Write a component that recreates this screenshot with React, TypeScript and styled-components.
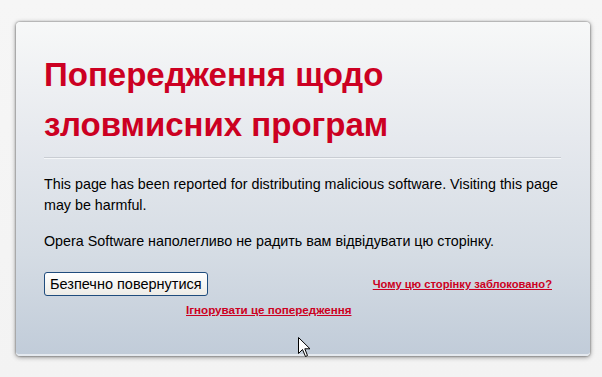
import React from 'react'
import styled, { createGlobalStyle } from 'styled-components'

const GlobalStyle = createGlobalStyle`
  html, body {
    margin: 0;
    padding: 0;
  }
  body {
    width: 602px;
    height: 377px;
    overflow: hidden;
    background: linear-gradient(180deg, #f6f6f6 0%, #f3f3f3 100%);
    font-family: "Liberation Sans", Arial, sans-serif;
  }
`;

const PageWrapper = styled.div`
  position: relative;
  width: 602px;
  height: 377px;
  padding: 22px 12px 0 16px;
  box-sizing: border-box;
`;

const Card = styled.div`
  width: 574px;
  height: 334px;
  box-sizing: border-box;
  padding: 28px 29px 0 28px;
  border-radius: 4px;
  background: linear-gradient(180deg, #f7f8f8 0%, #e6e9ee 35%, #d5dce4 70%, #c1ccd9 100%);
  border-bottom: 2px solid #e4e9ef;
  box-shadow: 0 0 2px rgba(0, 0, 0, 0.55), 0 1px 5px rgba(0, 0, 0, 0.45);
`;

const Title = styled.h1`
  margin: 0;
  padding-bottom: 7px;
  font-family: "Liberation Sans", Arial, sans-serif;
  font-size: 33px;
  line-height: 50px;
  font-weight: bold;
  color: #cc0022;
  border-bottom: 1px solid #c9cdd3;
  box-shadow: 0 1px 0 #f4f6f8;
`;

const Paragraph = styled.p`
  margin: 0;
  padding-top: ${(props: { gap: number }) => props.gap}px;
  font-size: 14.3px;
  line-height: 21px;
  color: #000;
`;

const ActionRow = styled.div`
  display: flex;
  align-items: center;
  justify-content: space-between;
  margin-top: 20px;
  padding-right: 9px;
`;

const SafeButton = styled.button`
  height: 24px;
  padding: 0 5px;
  font-family: "Liberation Sans", Arial, sans-serif;
  font-size: 14.5px;
  color: #000;
  background: linear-gradient(180deg, #ffffff 0%, #f4f4f1 60%, #ecebe6 100%);
  border: 1px solid #1f4c7d;
  border-radius: 3px;
  cursor: pointer;
`;

const WarnLink = styled.a`
  font-family: "Liberation Sans", Arial, sans-serif;
  font-size: ${(props: { size: number }) => props.size}px;
  font-weight: bold;
  color: #cc0022;
  text-decoration: underline;
  cursor: pointer;
`;

const IgnoreRow = styled.div`
  padding-left: 142px;
  margin-top: 4px;
`;

const Cursor = styled.svg`
  position: absolute;
  left: 298px;
  top: 337px;
`;

export default function App() {
    return (
        <PageWrapper>
            <GlobalStyle />
            <Card>
                <Title>Попередження щодо<br />зловмисних програм</Title>
                <Paragraph gap={16}>
                    This page has been reported for distributing malicious software. Visiting this page may be harmful.
                </Paragraph>
                <Paragraph gap={15}>
                    Opera Software наполегливо не радить вам відвідувати цю сторінку.
                </Paragraph>
                <ActionRow>
                    <SafeButton>Безпечно повернутися</SafeButton>
                    <WarnLink size={11.2}>Чому цю сторінку заблоковано?</WarnLink>
                </ActionRow>
                <IgnoreRow>
                    <WarnLink size={11.6}>Ігнорувати це попередження</WarnLink>
                </IgnoreRow>
            </Card>
            <Cursor width="13" height="21" viewBox="0 0 13 21">
                <path d="M0.5 0.5 L0.5 16.5 L4.5 12.5 L7.5 19.5 L9.5 18.5 L6.8 11.8 L12 11.8 Z" fill="#fff" stroke="#000" strokeWidth="1" strokeLinejoin="miter" />
            </Cursor>
        </PageWrapper>
    );
}
